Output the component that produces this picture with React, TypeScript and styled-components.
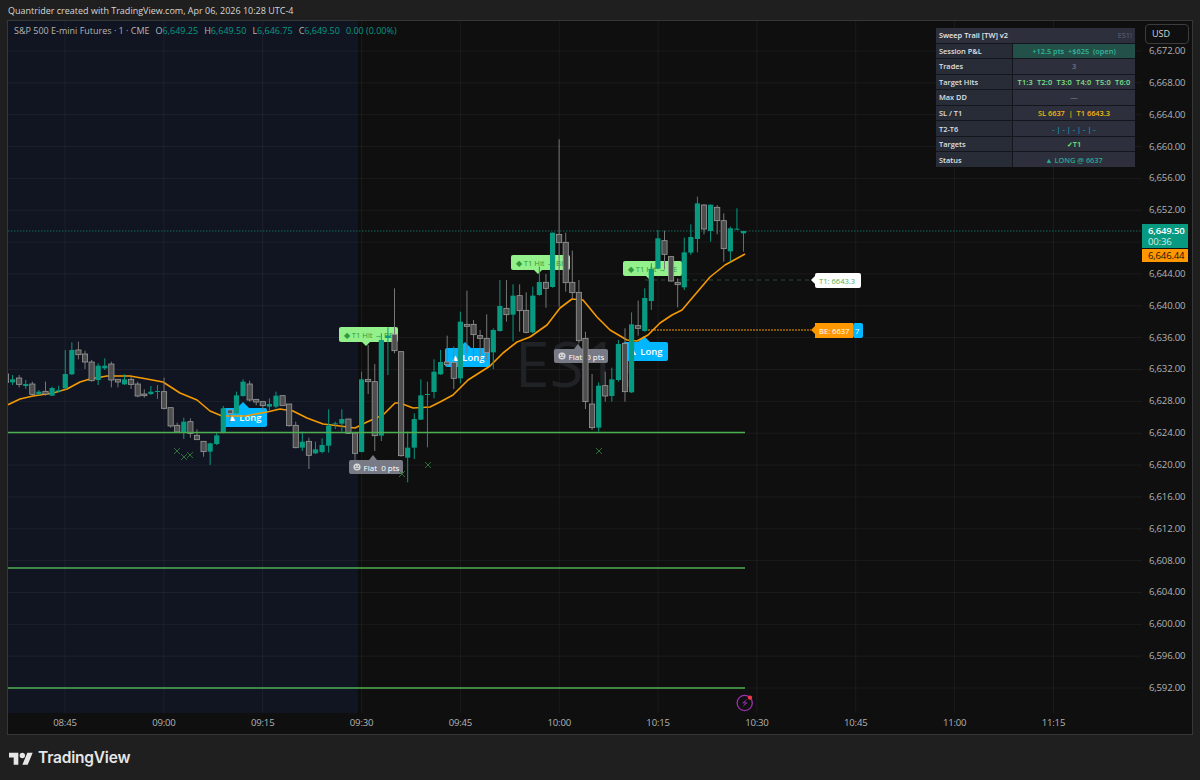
import styled, { createGlobalStyle } from "styled-components"

const GlobalStyle = createGlobalStyle`
  html, body {
    margin: 0;
    padding: 0;
    background: #1f1f1f;
  }
  * {
    box-sizing: border-box;
  }
`

const FONT = `"Open Sans", "Noto Sans", "Liberation Sans", sans-serif`

// candles are read straight off the picture: [up, bodyTop, bodyBottom, wickTop, wickBottom]
// each group keeps its own y origin and values are at 3x
type Row = [number, number, number, number, number]

const groupA: Row[] = [
  [0, 132, 157, 120, 165], [1, 148, 157, 135, 165], [0, 144, 163, 135, 172], [1, 162, 168, 150, 176],
  [0, 162, 193, 155, 197], [1, 185, 193, 180, 195], [0, 184, 192, 155, 197], [1, 174, 197, 170, 198],
  [1, 181, 184, 167, 188], [1, 132, 175, 60, 178], [1, 60, 133, 37, 135], [0, 60, 74, 35, 88],
  [0, 72, 96, 62, 117], [0, 96, 152, 90, 155], [1, 107, 150, 100, 165], [1, 107, 115, 85, 120],
  [0, 102, 150, 95, 172], [0, 148, 156, 148, 172], [1, 148, 163, 133, 165], [0, 148, 163, 140, 177],
  [0, 162, 198, 155, 202], [0, 192, 197, 178, 203], [1, 185, 192, 168, 195], [1, 183, 186, 165, 207],
  [0, 185, 235, 143, 238], [0, 233, 288, 233, 293], [0, 286, 306, 278, 308], [1, 275, 308, 263, 327],
  [0, 275, 310, 265, 323], [0, 316, 329, 298, 330], [0, 334, 365, 334, 380], [1, 340, 365, 338, 405],
  [1, 316, 342, 307, 345], [1, 235, 308, 228, 310], [0, 240, 250, 238, 280], [1, 196, 250, 185, 252],
  [1, 155, 198, 148, 200], [0, 162, 210, 152, 215], [0, 208, 216, 208, 226], [0, 215, 227, 215, 240],
  [1, 222, 230, 205, 240], [1, 197, 230, 185, 235], [0, 197, 227, 197, 228], [0, 222, 287, 222, 290],
  [0, 286, 353, 275, 355],
]

const groupB: Row[] = [
  [1, 515, 533, 485, 543], [0, 514, 556, 503, 597], [1, 538, 550, 515, 552], [1, 525, 546, 505, 550],
  [1, 467, 527, 418, 548], [1, 460, 463, 455, 477], [1, 447, 461, 418, 485], [0, 447, 490, 447, 490],
  [0, 489, 550, 489, 570], [1, 328, 546, 305, 547], [0, 328, 335, 225, 372], [0, 335, 497, 282, 543],
  [1, 210, 497, 190, 513], [1, 197, 204, 172, 315], [0, 193, 242, 55, 250], [0, 245, 557, 245, 560],
  [1, 533, 563, 485, 637], [1, 447, 533, 430, 567], [1, 376, 449, 328, 450], [1, 372, 375, 335, 532],
  [1, 305, 366, 268, 385], [1, 276, 313, 240, 315], [0, 276, 284, 197, 290], [0, 277, 325, 230, 357],
]

const groupC: Row[] = [
  [1, 575, 745, 545, 760], [0, 583, 589, 482, 670], [0, 583, 614, 570, 680], [0, 617, 625, 600, 690],
  [0, 625, 667, 553, 690], [1, 600, 667, 595, 717], [1, 528, 603, 450, 605], [0, 535, 554, 450, 575],
  [1, 497, 554, 463, 634], [0, 497, 542, 463, 605], [0, 541, 607, 487, 610], [1, 497, 607, 470, 610],
  [1, 456, 495, 410, 497], [0, 457, 475, 432, 533], [1, 308, 471, 308, 473], [0, 313, 338, 28, 530],
  [0, 337, 458, 308, 485], [0, 457, 488, 362, 505], [0, 487, 632, 450, 640], [0, 625, 815, 605, 837],
  [0, 822, 893, 732, 900], [1, 767, 893, 757, 905],
]

const groupD: Row[] = [
  [0, 587, 618, 545, 635], [1, 568, 618, 533, 635], [1, 462, 570, 450, 575], [0, 460, 605, 415, 635],
  [1, 403, 607, 367, 609], [0, 407, 415, 332, 437], [1, 324, 423, 295, 425], [1, 237, 333, 220, 360],
  [1, 145, 236, 120, 238], [0, 152, 193, 122, 238], [0, 200, 273, 200, 275], [0, 277, 284, 265, 352],
  [1, 187, 292, 143, 300], [1, 141, 188, 103, 195], [1, 40, 147, 20, 187], [0, 45, 117, 43, 133],
  [1, 44, 123, 44, 155], [0, 52, 92, 45, 133], [0, 92, 176, 70, 215], [1, 115, 184, 110, 215],
  [1, 116, 119, 55, 120], [1, 123, 130, 123, 185],
]

const candles = [
  ...groupA.map((r) => ({ r, y0: 330 })),
  ...groupB.map((r) => ({ r, y0: 270 })),
  ...groupC.map((r) => ({ r, y0: 130 })),
  ...groupD.map((r) => ({ r, y0: 190 })),
].map(({ r, y0 }, i) => ({
  x: 6 + i * 6.585,
  up: r[0] === 1,
  top: y0 + r[1] / 3,
  bottom: y0 + r[2] / 3,
  high: y0 + r[3] / 3,
  low: y0 + r[4] / 3,
}))

const maLine = `8,404.7 20,399 33,396 53,393 67,389 80,382 90,379 107,376 130,376 147,379 163,382 180,393 197,400 210,411
  222,416 245,416 267,412 280,409 293,411 307,418 323,424 340,426 355,428 367,422 383,415 395,403 400,403 413,408 430,407
  440,402 453,395 468,380 490,366 503,353 517,342 530,337 547,325 560,308 572,299 583,300 597,317 610,330 627,340 637,341
  648,335 660,323 672,315 682,310 693,297 710,277 725,265 745,254`

const prices = ["6,672.00", "6,668.00", "6,664.00", "6,660.00", "6,656.00", "6,652.00", "", "6,644.00", "6,640.00", "6,636.00", "6,632.00", "6,628.00", "6,624.00", "6,620.00", "6,616.00", "6,612.00", "6,608.00", "6,604.00", "6,600.00", "6,596.00", "6,592.00"]
const times = ["08:45", "09:00", "09:15", "09:30", "09:45", "10:00", "10:15", "10:30", "10:45", "11:00", "11:15"]
const crosses = [[177, 451], [184, 457], [190, 455], [402, 474], [428, 465], [599, 451]]

const tableRows = [
  { label: "Session P&L", value: "+12.5 pts  +$625  (open)", color: "#2fb89c", bg: "#24504a" },
  { label: "Trades", value: "3", color: "#6f7280" },
  { label: "Target Hits", value: "T1:3  T2:0  T3:0  T4:0  T5:0  T6:0", color: "#7fe08a", spacing: 0.17 },
  { label: "Max DD", value: "—", color: "#6f7280" },
  { label: "SL / T1", value: "SL 6637  |  T1 6643.3", color: "#f5b90f" },
  { label: "T2-T6", value: "- | - | - | - | -", color: "#0a9fb5" },
  { label: "Targets", value: "✓T1", color: "#6ee879" },
  { label: "Status", value: "▲ LONG @ 6637", color: "#2aa792" },
]

export default function App() {
  return (
    <Page>
      <GlobalStyle />
      <Header>Quantrider created with TradingView.com, Apr 06, 2026 10:28 UTC-4</Header>
      <Frame>
        <Pane>
          <Layer viewBox="8 21 1134 692">
            <rect x="8" y="21" width="350" height="692" fill="#111521" />
            <rect x="358" y="21" width="3" height="692" fill="#0d0d0d" />
            {times.map((t, i) => (
              <line key={t} x1={65 + i * 98.85} x2={65 + i * 98.85} y1="21" y2="713" stroke="#fff" strokeOpacity="0.05" />
            ))}
            {prices.map((p, i) => (
              <line key={i} x1="8" x2="1142" y1={51 + i * 31.85} y2={51 + i * 31.85} stroke="#fff" strokeOpacity="0.05" />
            ))}
          </Layer>

          <Watermark>ES1!</Watermark>

          <Legend>
            <span>S&amp;P 500 E-mini Futures · 1 · CME</span>
            <LegendValue><i>O</i>6,649.25</LegendValue>
            <LegendValue><i>H</i>6,649.50</LegendValue>
            <LegendValue><i>L</i>6,646.75</LegendValue>
            <LegendValue><i>C</i>6,649.50</LegendValue>
            <LegendValue>0.00 (0.00%)</LegendValue>
          </Legend>

          <LongTag $x={222} $y={408} $arrow={21}>▲ Long</LongTag>
          <LongTag $x={445} $y={348} $arrow={20}>▲ Long</LongTag>
          <LongTag $x={623} $y={342} $arrow={21}>▲ Long</LongTag>
          <HitTag $x={339} $y={327} $arrow={27}>◆ T1 Hit → BE</HitTag>
          <HitTag $x={511} $y={255} $arrow={27}>◆ T1 Hit → BE</HitTag>
          <HitTag $x={623} $y={261} $arrow={27}>◆ T1 Hit → BE</HitTag>
          <FlatTag $x={349} $y={460} $arrow={24}><Face />Flat  0 pts</FlatTag>
          <FlatTag $x={554} $y={349} $arrow={24}><Face />Flat  0 pts</FlatTag>

          <StopTag $x={853} $y={323}>7</StopTag>
          <BreakEvenTag $x={815} $y={323}>BE: 6637</BreakEvenTag>
          <TargetTag $x={815} $y={273}>T1: 6643.3</TargetTag>

          <Layer viewBox="8 21 1134 692">
            <line x1="8" x2="1142" y1="231" y2="231" stroke="#0f6b5c" strokeWidth="1" strokeDasharray="1.5 1.5" />
            <line x1="645" x2="811" y1="280" y2="280" stroke="#2c4a30" strokeWidth="1" strokeDasharray="4 4" />
            <line x1="645" x2="811" y1="330" y2="330" stroke="#f59a00" strokeWidth="1" strokeDasharray="2 1" />
            <polyline points={maLine} fill="none" stroke="#f59a00" strokeWidth="1.6" strokeLinejoin="round" />
            {candles.map((c, i) => {
              const color = c.up ? "#089981" : "#8a8a8a"
              return (
                <g key={i}>
                  <line x1={c.x} x2={c.x} y1={c.high} y2={c.low} stroke={c.up ? color : "#777"} strokeWidth="1" />
                  <rect
                    x={c.x - 2.6}
                    y={c.top}
                    width="5.2"
                    height={Math.max(c.bottom - c.top, 1)}
                    fill={c.up ? color : "#4e4e4e"}
                    stroke={c.up ? "none" : "#9b9b9b"}
                    strokeWidth="0.8"
                  />
                </g>
              )
            })}
            <line x1="8" x2="745" y1="432.5" y2="432.5" stroke="#4caf50" strokeWidth="1.5" />
            <line x1="8" x2="745" y1="568" y2="568" stroke="#4caf50" strokeWidth="1.5" />
            <line x1="8" x2="745" y1="688" y2="688" stroke="#4caf50" strokeWidth="1.5" />
            {crosses.map(([x, y]) => (
              <path key={x} d={`M${x - 3} ${y - 3}L${x + 3} ${y + 3}M${x + 3} ${y - 3}L${x - 3} ${y + 3}`} stroke="#2f6f38" strokeWidth="1" />
            ))}
            <circle cx="744.7" cy="703" r="7.6" fill="none" stroke="#9c2fb0" strokeWidth="1.3" />
            <path d="M747.5 698.5l-5.5 4.7h3.2l-3 4.3 5.6-4.9h-3.2z" fill="#9c2fb0" />
            <circle cx="750" cy="697.6" r="2.2" fill="#f23645" />
          </Layer>

          <Table>
            <TitleRow>
              <span>Sweep Trail [TW] v2</span>
              <Symbol>ES1!</Symbol>
            </TitleRow>
            {tableRows.map((row) => (
              <Row key={row.label}>
                <RowLabel>{row.label}</RowLabel>
                <RowValue $color={row.color} $bg={row.bg} $spacing={row.spacing}>{row.value}</RowValue>
              </Row>
            ))}
          </Table>
        </Pane>

        <PriceAxis>
          <Currency>USD</Currency>
          {prices.map((p, i) => (
            <PriceTick key={i}>{p}</PriceTick>
          ))}
          <LastPrice>
            <b>6,649.50</b>
            <span>00:36</span>
          </LastPrice>
          <MaPrice>6,646.44</MaPrice>
        </PriceAxis>

        <TimeAxis>
          {times.map((t) => (
            <TimeTick key={t}>{t}</TimeTick>
          ))}
        </TimeAxis>
      </Frame>
      <Footer>
        <svg width="24" height="15" viewBox="0 0 36 22" fill="#e6e6e6">
          <path d="M14 22H7V11H0V4h14v18zM28 22h-8l7.5-18h8L28 22z" />
          <circle cx="20" cy="8" r="4" />
        </svg>
        <Brand>TradingView</Brand>
      </Footer>
    </Page>
  )
}

const Face = () => (
  <svg width="8" height="8" viewBox="0 0 8 8">
    <circle cx="4" cy="4" r="3.6" fill="#d8d9dc" />
    <circle cx="2.7" cy="3.2" r="0.6" fill="#555" />
    <circle cx="5.3" cy="3.2" r="0.6" fill="#555" />
    <path d="M2.4 5.4h3.2" stroke="#555" strokeWidth="0.7" />
  </svg>
)

const Page = styled.div`
  width: 1200px;
  height: 780px;
  overflow: hidden;
  background: #1f1f1f;
  font-family: ${FONT};
`

const Header = styled.div`
  height: 20px;
  padding: 4px 0 0 8px;
  font-size: 9px;
  line-height: 13px;
  color: #d6d6d6;
  white-space: nowrap;
`

const Frame = styled.div`
  margin: 0 7px;
  width: 1186px;
  height: 715px;
  border: 1px solid #363636;
  display: grid;
  grid-template-columns: 1134px 50px;
  grid-template-rows: 692px 21px;
  background: #0f0f0f;
`

const Pane = styled.div`
  position: relative;
  overflow: hidden;
`

const Layer = styled.svg`
  position: absolute;
  inset: 0;
  width: 1134px;
  height: 692px;
`

const Watermark = styled.div`
  position: absolute;
  left: 507px;
  top: 300px;
  font-size: 62px;
  line-height: 84px;
  font-weight: 400;
  color: #212226;
`

const Legend = styled.div`
  position: absolute;
  left: 6px;
  top: 3px;
  display: flex;
  gap: 6px;
  font-size: 9px;
  line-height: 14px;
  color: #b4b4b4;
  white-space: nowrap;
`

const LegendValue = styled.span`
  color: #089981;
  i {
    font-style: normal;
    color: #b4b4b4;
  }
`

const Tag = styled.div<{ $x: number; $y: number }>`
  position: absolute;
  left: ${(p) => p.$x - 8}px;
  top: ${(p) => p.$y - 21}px;
  display: flex;
  align-items: center;
  justify-content: center;
  gap: 3px;
  border-radius: 2px;
  white-space: pre;
`

const LongTag = styled(Tag)<{ $arrow: number }>`
  width: 45px;
  height: 19px;
  background: #00b7ff;
  color: #fff;
  font-size: 9.5px;
  font-weight: 600;
  &::before {
    content: "";
    position: absolute;
    left: ${(p) => p.$arrow - 6}px;
    top: -6px;
    border: 6px solid transparent;
    border-top: 0;
    border-bottom-color: #00b7ff;
  }
`

const HitTag = styled(Tag)<{ $arrow: number }>`
  width: 59px;
  height: 15px;
  background: #93f08b;
  color: #2f9a3c;
  font-size: 7.6px;
  &::after {
    content: "";
    position: absolute;
    left: ${(p) => p.$arrow - 4}px;
    bottom: -4px;
    border: 4px solid transparent;
    border-bottom: 0;
    border-top-color: #93f08b;
  }
`

const FlatTag = styled(Tag)<{ $arrow: number }>`
  width: 54px;
  height: 14px;
  background: #787b86;
  color: #fff;
  font-size: 8px;
  &::before {
    content: "";
    position: absolute;
    left: ${(p) => p.$arrow - 4}px;
    top: -5px;
    border: 4px solid transparent;
    border-top: 0;
    border-bottom: 5px solid #787b86;
  }
`

const SideTag = styled(Tag)`
  height: 15px;
  font-size: 7.6px;
  font-weight: 500;
  justify-content: flex-start;
  padding-left: 4px;
`

const StopTag = styled(SideTag)`
  width: 10px;
  background: #00b7ff;
  color: #fff;
  padding-left: 2px;
`

const BreakEvenTag = styled(SideTag)`
  width: 38px;
  background: #ff9800;
  color: #fff;
  border-radius: 0;
  &::before {
    content: "";
    position: absolute;
    left: -4px;
    top: 3px;
    border: 4.5px solid transparent;
    border-left: 0;
    border-right: 4px solid #ff9800;
  }
`

const TargetTag = styled(SideTag)`
  width: 46px;
  background: #fff;
  color: #4caf50;
  &::before {
    content: "";
    position: absolute;
    left: -4px;
    top: 3px;
    border: 4.5px solid transparent;
    border-left: 0;
    border-right: 4px solid #fff;
  }
`

const Table = styled.div`
  position: absolute;
  left: 928px;
  top: 7px;
  width: 199px;
  height: 139px;
  display: grid;
  grid-template-rows: repeat(9, 1fr);
  gap: 1px;
  background: #14161d;
  font-size: 7.4px;
  font-weight: 600;
`

const TitleRow = styled.div`
  display: flex;
  align-items: center;
  justify-content: space-between;
  padding: 0 3px;
  background: #2d303c;
  color: #e8e9ec;
`

const Symbol = styled.span`
  color: #5f6270;
  font-weight: 400;
`

const Row = styled.div`
  display: grid;
  grid-template-columns: 76px 1fr;
  gap: 1px;
`

const RowLabel = styled.div`
  display: flex;
  align-items: center;
  padding-left: 3px;
  background: #282c37;
  color: #dfe0e4;
`

const RowValue = styled.div<{ $color: string; $bg?: string; $spacing?: number }>`
  display: flex;
  align-items: center;
  justify-content: center;
  background: ${(p) => p.$bg || "#2d303c"};
  color: ${(p) => p.$color};
  letter-spacing: ${(p) => p.$spacing || 0}px;
  white-space: pre;
`

const PriceAxis = styled.div`
  position: relative;
  padding-top: 14px;
  background: #0f0f0f;
`

const PriceTick = styled.div`
  height: 31.85px;
  line-height: 31.85px;
  padding-left: 7px;
  font-size: 9.6px;
  letter-spacing: -0.2px;
  color: #b4b4b4;
  white-space: nowrap;
`

const Currency = styled.div`
  position: absolute;
  left: 3px;
  top: 3px;
  width: 44px;
  height: 20px;
  border: 1px solid #3c3c3c;
  border-radius: 4px;
  font-size: 9px;
  line-height: 18px;
  padding-left: 6px;
  color: #d6d6d6;
`

const LastPrice = styled.div`
  position: absolute;
  left: 0;
  top: 203px;
  width: 46px;
  height: 24px;
  background: #089981;
  padding-left: 6px;
  font-size: 9.6px;
  letter-spacing: -0.2px;
  line-height: 11.5px;
  color: #fff;
  display: flex;
  flex-direction: column;
  justify-content: center;
  b {
    font-weight: 600;
  }
  span {
    color: #cdeee6;
  }
`

const MaPrice = styled.div`
  position: absolute;
  left: 0;
  top: 228px;
  width: 46px;
  height: 13px;
  background: #ff9800;
  padding-left: 6px;
  font-size: 9.6px;
  letter-spacing: -0.2px;
  line-height: 13px;
  color: #1a1205;
`

const TimeAxis = styled.div`
  display: flex;
  padding-left: 7.6px;
  background: #0f0f0f;
`

const TimeTick = styled.div`
  width: 98.85px;
  flex: none;
  text-align: center;
  font-size: 9.6px;
  letter-spacing: -0.2px;
  line-height: 19px;
  color: #b4b4b4;
`

const Footer = styled.div`
  display: flex;
  align-items: center;
  gap: 5px;
  height: 45px;
  padding-left: 9px;
`

const Brand = styled.span`
  font-family: Inter, "Liberation Sans", sans-serif;
  font-size: 15.5px;
  font-weight: 600;
  color: #e6e6e6;
  letter-spacing: -0.2px;
`
